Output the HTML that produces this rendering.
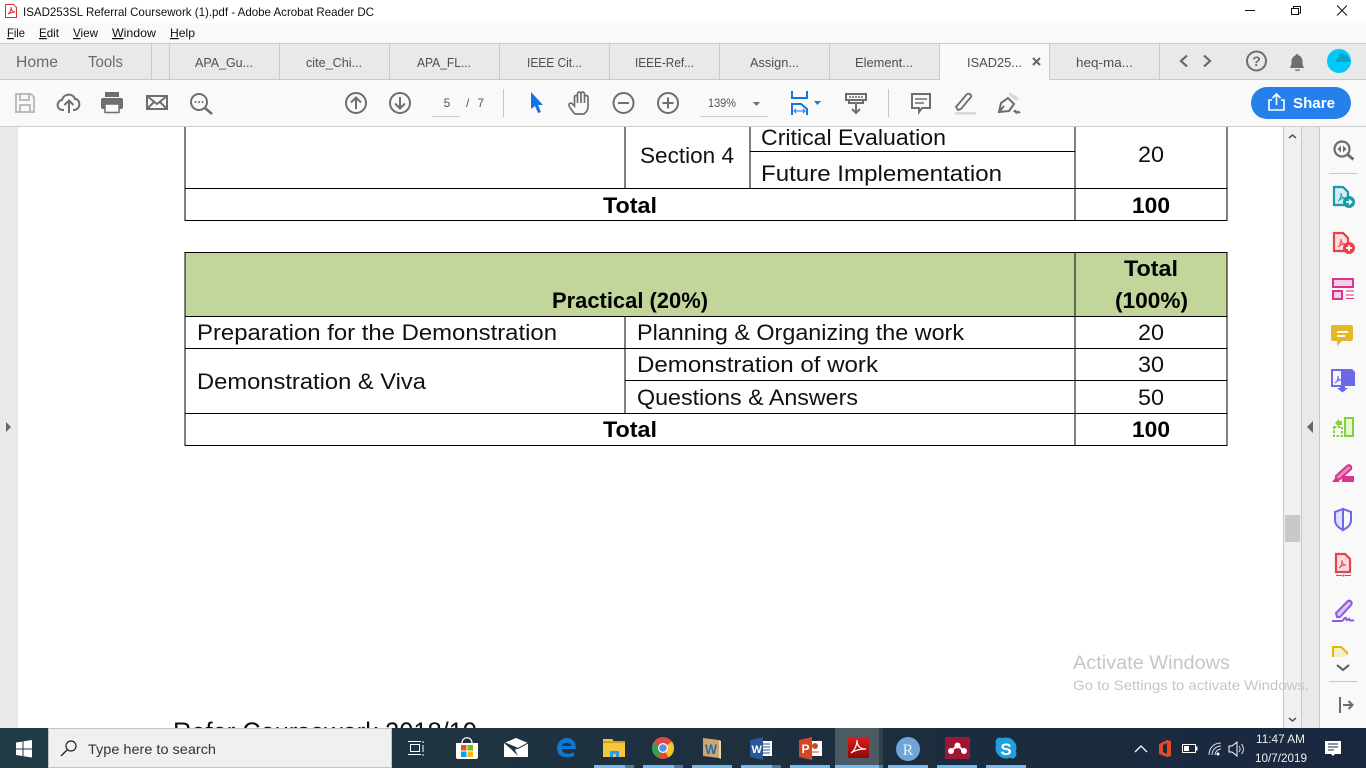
<!DOCTYPE html>
<html lang="en"><head><meta charset="utf-8"><title>ISAD253SL Referral Coursework (1).pdf - Adobe Acrobat Reader DC</title>
<style>
html,body{margin:0;padding:0;width:1366px;height:768px;overflow:hidden;background:#fff}
svg{display:block;font-family:"Liberation Sans",sans-serif}
.m{font-size:12px;fill:#111}
.tb{font-size:13px;fill:#4e4e4e}
.d{font-size:22px;fill:#111}
.b{font-size:22px;fill:#000;font-weight:bold}
.g{fill:none;stroke:#6e6e6e;stroke-width:2}
.l{stroke:#000;stroke-width:1;shape-rendering:crispEdges}
.s{shape-rendering:crispEdges}
</style></head><body>
<svg width="1366" height="768" viewBox="0 0 1366 768" xmlns="http://www.w3.org/2000/svg">
<!-- chrome backgrounds -->
<rect width="1366" height="768" fill="#fff"/>
<rect y="23" width="1366" height="20" fill="#f9f9f9"/>
<rect y="43" width="1366" height="1" fill="#cdcdcd"/>
<rect y="44" width="1366" height="35" fill="#e9e9e9"/>
<rect y="79" width="1366" height="1" fill="#c8c8c8"/>
<rect y="80" width="1366" height="46" fill="#f9f9f9"/>
<rect y="126" width="1366" height="1" fill="#cdcdcd"/>
<!-- title -->
<g fill="none" stroke="#e0322d" stroke-width="1"><path d="M5.500 4.500h8l3 3v10h-11z" fill="#fff"/><path d="M8 14c2-1 3-4 3-7 0 3 1 5 4 5-3 0-5 1-7 2z"/></g>
<text x="23" y="16" class="m" textLength="351" lengthAdjust="spacingAndGlyphs">ISAD253SL Referral Coursework (1).pdf - Adobe Acrobat Reader DC</text>
<!-- window controls -->
<rect x="1245" y="10" width="10" height="1" fill="#111"/>
<g fill="none" stroke="#111" stroke-width="1" class="s"><rect x="1291.500" y="8.500" width="7" height="6"/><path d="M1293.500 8V6.500h7v6.500h-2"/></g>
<path d="M1337 5.500l10 10M1347 5.500l-10 10" stroke="#111" stroke-width="1" fill="none"/>
<!-- menu -->
<text x="7" y="37" class="m" textLength="18" lengthAdjust="spacingAndGlyphs"><tspan text-decoration="underline">F</tspan>ile</text>
<text x="39" y="37" class="m" textLength="20" lengthAdjust="spacingAndGlyphs"><tspan text-decoration="underline">E</tspan>dit</text>
<text x="73" y="37" class="m" textLength="25" lengthAdjust="spacingAndGlyphs"><tspan text-decoration="underline">V</tspan>iew</text>
<text x="112" y="37" class="m" textLength="44" lengthAdjust="spacingAndGlyphs"><tspan text-decoration="underline">W</tspan>indow</text>
<text x="170" y="37" class="m" textLength="25" lengthAdjust="spacingAndGlyphs"><tspan text-decoration="underline">H</tspan>elp</text>
<!-- tabs -->
<text x="16" y="67" font-size="16" fill="#6a6a6a" textLength="42" lengthAdjust="spacingAndGlyphs">Home</text>
<text x="88" y="67" font-size="16" fill="#6a6a6a" textLength="35" lengthAdjust="spacingAndGlyphs">Tools</text>
<g fill="#cacaca" class="s">
<rect x="151" y="44" width="1" height="35"/><rect x="169" y="44" width="1" height="35"/><rect x="279" y="44" width="1" height="35"/><rect x="389" y="44" width="1" height="35"/><rect x="499" y="44" width="1" height="35"/><rect x="609" y="44" width="1" height="35"/><rect x="719" y="44" width="1" height="35"/><rect x="829" y="44" width="1" height="35"/><rect x="939" y="44" width="1" height="35"/><rect x="1049" y="44" width="1" height="35"/><rect x="1159" y="44" width="1" height="35"/>
</g>
<rect x="940" y="44" width="109" height="36" fill="#f9f9f9"/>
<g class="tb">
<text x="195" y="67" textLength="58" lengthAdjust="spacingAndGlyphs">APA_Gu...</text>
<text x="306" y="67" textLength="56" lengthAdjust="spacingAndGlyphs">cite_Chi...</text>
<text x="417" y="67" textLength="54" lengthAdjust="spacingAndGlyphs">APA_FL...</text>
<text x="527" y="67" textLength="55" lengthAdjust="spacingAndGlyphs">IEEE Cit...</text>
<text x="635" y="67" textLength="59" lengthAdjust="spacingAndGlyphs">IEEE-Ref...</text>
<text x="750" y="67" textLength="49" lengthAdjust="spacingAndGlyphs">Assign...</text>
<text x="855" y="67" textLength="58" lengthAdjust="spacingAndGlyphs">Element...</text>
<text x="967" y="67" textLength="55" lengthAdjust="spacingAndGlyphs">ISAD25...</text>
<text x="1076" y="67" textLength="57" lengthAdjust="spacingAndGlyphs">heq-ma...</text>
</g>
<path d="M1033 58l7 7M1040 58l-7 7" stroke="#666" stroke-width="2" fill="none"/>
<path d="M1187 55.500l-6 5.500 6 5.500M1204 55.500l6 5.500-6 5.500" stroke="#666" stroke-width="2.200" fill="none"/>
<circle cx="1256.500" cy="61" r="9.500" class="g"/>
<text x="1256.500" y="66" font-size="14" font-weight="bold" fill="#6e6e6e" text-anchor="middle">?</text>
<path d="M1289.500 68c2-2 2-4 2-7 0-3 2.500-5 4-5.500 0-2 3-2 3 0 2 .5 4 2.500 4 5.500 0 3 0 5 2 7z" fill="#6e6e6e"/><path d="M1294.500 69.500h6c-.5 2-5.500 2-6 0z" fill="#6e6e6e"/>
<circle cx="1339" cy="61" r="12" fill="#00c9f9"/>
<path d="M1335 62l5-9c4 0 9 3 11 9z" fill="#07a5c9"/>
<!-- toolbar -->
<g fill="none" stroke="#bcbcbc" stroke-width="2"><path d="M16 94h15l3 3v15H16z"/><path d="M20 94v6h9v-6M20 112v-7h10v7"/></g>
<g class="g"><path d="M64 110h-1c-7 0-7-9-1-10 2-7 11-7 13-1 6 0 6 11-1 11h-1"/><path d="M69 113v-12M64.500 105l4.500-4.500 4.500 4.500"/></g>
<g fill="#6e6e6e"><rect x="101" y="98" width="22" height="11" rx="2"/><rect x="105" y="92" width="14" height="5"/><rect x="105" y="104" width="14" height="8.500" fill="#f9f9f9" stroke="#6e6e6e" stroke-width="1.500"/></g>
<g class="g"><rect x="147" y="96" width="20" height="13"/><path d="M147 96l10 8 10-8M147 109l7-7M167 109l-7-7"/></g>
<g class="g"><circle cx="199" cy="102" r="8"/><path d="M205 108l7 6" stroke-width="2.500"/></g>
<g fill="#6e6e6e"><circle cx="195.500" cy="102" r="1"/><circle cx="199" cy="102" r="1"/><circle cx="202.500" cy="102" r="1"/></g>
<g class="g"><circle cx="356" cy="103" r="10"/><path d="M356 109v-11M351 102.500l5-5 5 5"/><circle cx="400" cy="103" r="10"/><path d="M400 97v11M395 103.500l5 5 5-5"/></g>
<text x="447" y="107" font-size="12" fill="#555" text-anchor="middle">5</text>
<rect x="432" y="116" width="28" height="1" fill="#c8c8c8"/>
<text x="466" y="107" font-size="12" fill="#555" textLength="18" xml:space="preserve">/ 7</text>
<rect x="503" y="89" width="1" height="28" fill="#c8c8c8"/>
<path d="M531 92l12 13h-5l3 7-3 1-3-7-4 3z" fill="#1473e6"/>
<g class="g"><path d="M575 114c-2-2-6-7-6-9 0-2 2-2.500 3.500-1l2 2V97c0-2 3-2 3 0v-3c0-2.500 3.500-2.500 3.500 0v0c0-2.500 3.500-2.500 3.500 0v3c0-2 3.500-2 3.500 0v9c0 5-2 6-4 8zM577.500 97v6M581 94v9M584.500 94v9M588 97v6" stroke-width="1.700"/></g>
<g class="g"><circle cx="623.500" cy="103" r="10"/><path d="M618 103h11"/><circle cx="668" cy="103" r="10"/><path d="M662.500 103h11M668 97.500v11"/></g>
<text x="708" y="107" font-size="12" fill="#555" textLength="28" lengthAdjust="spacingAndGlyphs">139%</text>
<path d="M753 102h7l-3.500 4z" fill="#6e6e6e"/>
<rect x="700" y="116" width="68" height="1" fill="#c8c8c8"/>
<g fill="none" stroke="#1473e6" stroke-width="2"><path d="M792 91v7h15v-7"/><path d="M792 115v-11h9l6 5v6"/></g><path d="M794 111h11M796 109l-2 2 2 2M803 109l2 2-2 2" stroke="#1473e6" fill="none" stroke-width="1"/>
<path d="M814 101h7l-3.500 4z" fill="#1473e6"/>
<g class="g"><rect x="846" y="94" width="20" height="6"/><path d="M856 103v10M852 109l4 4 4-4M849 100v3h14v-3"/></g>
<path d="M849 97h14" stroke="#6e6e6e" stroke-width="1.500" stroke-dasharray="2 1"/>
<rect x="888" y="89" width="1" height="28" fill="#c8c8c8"/>
<g class="g"><path d="M912 94h18v14h-8l-3 4v-4h-7z"/><path d="M915 99h12M915 103h9" stroke-width="1.500"/></g>
<g class="g"><path d="M958 110l-2-3 11-13c2-1 5 1 4 3l-10 12z" stroke-width="1.800"/></g><rect x="955" y="112" width="21" height="2.500" fill="#d8d8d8"/>
<g class="g" stroke-width="1.800"><path d="M999 112l2-9 7-5 6 6-5 7z"/><path d="M1004 106l-5 6M1014 112c1-2 2-1 2 0s1 1 2 0 1 1 2 0"/></g><path d="M1009 92l10 6-3 3-7-6z" fill="#d8d8d8"/>
<rect x="1251" y="87" width="100" height="32" rx="16" fill="#2680eb"/>
<g fill="none" stroke="#fff" stroke-width="1.600"><path d="M1272 100h-3v10h15v-10h-3"/><path d="M1276.500 105V95M1272.500 98l4-4 4 4"/></g>
<text x="1293" y="108" font-size="15" font-weight="bold" fill="#fff" textLength="42" lengthAdjust="spacingAndGlyphs">Share</text>
<!-- side panels -->
<rect y="127" width="18" height="601" fill="#e9e9e9"/>
<path d="M6 422v10l5-5z" fill="#666"/>
<rect x="1283" y="127" width="1" height="601" fill="#c8c8c8"/>
<rect x="1284" y="127" width="17" height="601" fill="#f0f0f0"/>
<rect x="1301" y="127" width="1" height="601" fill="#c8c8c8"/>
<rect x="1302" y="127" width="17" height="601" fill="#e9e9e9"/>
<rect x="1319" y="127" width="1" height="601" fill="#c8c8c8"/>
<rect x="1320" y="127" width="46" height="601" fill="#f9f9f9"/>
<rect x="1285" y="515" width="15" height="27" fill="#c8c8c8"/>
<path d="M1289 138l3.500-3 3.500 3M1289 718l3.500 3 3.500-3" fill="none" stroke="#555" stroke-width="1.500"/>
<path d="M1313 421v12l-6-6z" fill="#666"/>
<!-- document: table 1 -->
<g class="l" fill="none">
<path d="M185 127v94M625 127v62M750 127v62M1075 127v94M1227 127v94"/>
<path d="M750 151.500h325M185 188.500h1042M185 220.500h1042"/>
</g>
<rect x="185" y="253" width="1042" height="63" fill="#c2d69b"/>
<g class="l" fill="none">
<path d="M185 252v194M625 316v97M1075 252v194M1227 252v194"/>
<path d="M185 252.500h1042M185 316.500h1042M185 348.500h1042M625 380.500h602M185 413.500h1042M185 445.500h1042"/>
</g>
<g transform="translate(0,-1)">
<text x="761" y="146" class="d" textLength="185" lengthAdjust="spacingAndGlyphs">Critical Evaluation</text>
<text x="640" y="164" class="d" textLength="94" lengthAdjust="spacingAndGlyphs">Section 4</text>
<text x="761" y="182" class="d" textLength="241" lengthAdjust="spacingAndGlyphs">Future Implementation</text>
<text x="1138" y="163" class="d" textLength="26" lengthAdjust="spacingAndGlyphs">20</text>
<text x="603" y="214" class="b" textLength="54" lengthAdjust="spacingAndGlyphs">Total</text>
<text x="1132" y="214" class="b" textLength="38" lengthAdjust="spacingAndGlyphs">100</text>
<text x="552" y="309" class="b" textLength="156" lengthAdjust="spacingAndGlyphs">Practical (20%)</text>
<text x="1124" y="277" class="b" textLength="54" lengthAdjust="spacingAndGlyphs">Total</text>
<text x="1115" y="309" class="b" textLength="73" lengthAdjust="spacingAndGlyphs">(100%)</text>
<text x="197" y="341" class="d" textLength="360" lengthAdjust="spacingAndGlyphs">Preparation for the Demonstration</text>
<text x="637" y="341" class="d" textLength="327" lengthAdjust="spacingAndGlyphs">Planning &amp; Organizing the work</text>
<text x="1138" y="341" class="d" textLength="26" lengthAdjust="spacingAndGlyphs">20</text>
<text x="637" y="373" class="d" textLength="241" lengthAdjust="spacingAndGlyphs">Demonstration of work</text>
<text x="1138" y="373" class="d" textLength="26" lengthAdjust="spacingAndGlyphs">30</text>
<text x="197" y="390" class="d" textLength="229" lengthAdjust="spacingAndGlyphs">Demonstration &amp; Viva</text>
<text x="637" y="406" class="d" textLength="221" lengthAdjust="spacingAndGlyphs">Questions &amp; Answers</text>
<text x="1138" y="406" class="d" textLength="26" lengthAdjust="spacingAndGlyphs">50</text>
<text x="603" y="438" class="b" textLength="54" lengthAdjust="spacingAndGlyphs">Total</text>
<text x="1132" y="438" class="b" textLength="38" lengthAdjust="spacingAndGlyphs">100</text>
</g>
<text x="173" y="741" font-size="27" fill="#111" textLength="304" lengthAdjust="spacingAndGlyphs">Refer Coursework 2018/19</text>
<!-- watermark -->
<text x="1073" y="669" font-size="19" fill="#c6c6c6" textLength="157" lengthAdjust="spacingAndGlyphs">Activate Windows</text>
<text x="1073" y="690" font-size="14" fill="#c6c6c6" textLength="236" lengthAdjust="spacingAndGlyphs">Go to Settings to activate Windows.</text>
<!-- right rail icons -->
<g fill="none" stroke="#6e6e6e" stroke-width="2.200"><circle cx="1342" cy="149" r="7.500"/><path d="M1347.500 154.500l6 5" stroke-width="2.800"/></g>
<path d="M1341 145.500l-3.500 3.500 3.500 3.500zM1343 145.500l3.500 3.500-3.500 3.500z" fill="#6e6e6e"/>
<rect x="1329" y="173" width="28" height="1" fill="#c8c8c8"/>
<!-- teal -->
<path d="M1334 187h9l5 5v13h-14z" fill="#d6ecee" stroke="#1a9aa5" stroke-width="2.200"/>
<path d="M1338 201c2-1 3-4 3-8 0 3 1 5 4 5-3 0-5 1-7 3z" fill="none" stroke="#1a9aa5"/>
<circle cx="1349" cy="202" r="6" fill="#1a9aa5"/><path d="M1346 202h5M1349 199.500l2.500 2.500-2.500 2.500" stroke="#fff" stroke-width="1.500" fill="none"/>
<!-- red -->
<path d="M1334 233h9l5 5v13h-14z" fill="#fbdde0" stroke="#e8404d" stroke-width="2.200"/>
<path d="M1338 247c2-1 3-4 3-8 0 3 1 5 4 5-3 0-5 1-7 3z" fill="none" stroke="#e8404d"/>
<circle cx="1349" cy="248" r="6" fill="#e8404d"/><path d="M1346 248h6M1349 245v6" stroke="#fff" stroke-width="1.800"/>
<!-- pink forms -->
<rect x="1333" y="279" width="20" height="8" fill="#f3d0e4" stroke="#d9338f" stroke-width="2"/>
<rect x="1333" y="291" width="9" height="8" fill="#f3d0e4" stroke="#d9338f" stroke-width="2"/>
<path d="M1346 291h8M1346 295h8M1346 298.500h8" stroke="#d9338f" stroke-width="1"/>
<!-- yellow comment -->
<path d="M1335 325h18a2 2 0 0 1 2 2v12a2 2 0 0 1-2 2h-9l-5 5v-5h-4a2 2 0 0 1-2-2v-12a2 2 0 0 1 2-2z" fill="#e3b929" transform="translate(-2 0)"/>
<path d="M1337 332h11M1337 336h8" stroke="#fff" stroke-width="1.800"/>
<!-- export -->
<path d="M1332 370h10v16h-10z" fill="#f4f3ff" stroke="#6b69e6" stroke-width="2"/>
<path d="M1342 369h10l3 3v14h-13z" fill="#6b69e6"/>
<path d="M1335 383c2-1 3-3 3-7 0 3 1 4 3 4-2 0-4 1-6 3z" fill="none" stroke="#6b69e6"/>
<path d="M1337 388h11l-5.500 4.500z" fill="#6b69e6"/><rect x="1340" y="385" width="5" height="4" fill="#6b69e6"/>
<!-- green organise -->
<rect x="1345" y="418" width="8" height="18" fill="#e4f5d0" stroke="#84cf40" stroke-width="2"/>
<path d="M1334 427h8v9h-8z" fill="none" stroke="#84cf40" stroke-width="2" stroke-dasharray="2.500 1.500"/>
<path d="M1335 423l4-4v2h3v4h-3v2z" fill="#84cf40"/>
<!-- pink edit -->
<path d="M1336 476l11-10c2-2 5 0 4 3l-11 10-4 1z" fill="#e78abb" stroke="#d9338f" stroke-width="2"/>
<rect x="1342" y="476" width="12" height="6" fill="#d9338f"/><path d="M1332 482l4-5 4 5z" fill="#d9338f"/>
<!-- shield -->
<path d="M1343 509l8 3v8c0 5-4 8-8 10-4-2-8-5-8-10v-8z" fill="#dfe0fb" stroke="#6b69e6" stroke-width="2"/>
<path d="M1343 509l8 3v8c0 5-4 8-8 10z" fill="#f9f9f9" stroke="#6b69e6" stroke-width="2"/>
<!-- pdf red -->
<path d="M1336 554h9l5 5v13h-14z" fill="#fbdde0" stroke="#e8404d" stroke-width="2.200"/>
<path d="M1339 568c2-1 3-4 3-8 0 3 1 5 4 5-3 0-5 1-7 3z" fill="none" stroke="#e8404d"/>
<path d="M1336 575.500h6M1345 575.500h6" stroke="#e8404d"/><rect x="1342.500" y="574.500" width="2" height="2" fill="#e8404d"/>
<!-- purple sign -->
<path d="M1337 617l-1-4 12-12c2-1 5 1 3 4l-11 12z" fill="#d9c6f5" stroke="#9258de" stroke-width="2"/>
<path d="M1332 621h10c2-1 2-4 4-3 0 3 2 2 3 1 1 2 3 2 5 1" fill="none" stroke="#9258de" stroke-width="2"/>
<!-- yellow clipped -->
<path d="M1333 657v-10h8l6 5.500v4.500z" fill="#f5efc8"/><path d="M1333 657v-10h8l6 5.500v2" fill="none" stroke="#e3b900" stroke-width="2"/>
<path d="M1337 665l6 5 6-5" fill="none" stroke="#555" stroke-width="2"/>
<rect x="1329" y="681" width="28" height="1" fill="#c8c8c8"/>
<rect x="1339" y="697" width="2" height="16" fill="#6e6e6e"/><path d="M1343 705h9M1348.500 701l4 4-4 4" stroke="#6e6e6e" stroke-width="2" fill="none"/>
<!-- taskbar -->
<defs><linearGradient id="tbg" x1="0" x2="1" y1="0" y2="0"><stop offset="0" stop-color="#203a46"/><stop offset=".55" stop-color="#1e2f3e"/><stop offset="1" stop-color="#192740"/></linearGradient></defs>
<rect y="728" width="1366" height="40" fill="url(#tbg)"/>
<path d="M16 742.500l6.500-1v7H16zM23.500 741.300l8.500-1.300v8.500h-8.500zM16 749.500h6.500v6.500l-6.500-1zM23.500 749.500H32v8l-8.500-1.300z" fill="#fff"/>
<rect x="48.500" y="728.500" width="343" height="39" fill="#f0f0f0" stroke="#c4c4c4"/>
<circle cx="71" cy="746" r="5" fill="none" stroke="#222" stroke-width="1.200"/><path d="M67 750l-6 6" stroke="#222" stroke-width="1.300"/>
<text x="88" y="754" font-size="14" fill="#333" textLength="128" lengthAdjust="spacingAndGlyphs">Type here to search</text>
<g fill="none" stroke="#fff" stroke-width="1.200" class="s"><rect x="410.500" y="744.500" width="9" height="7"/><path d="M408 741.500h13M408 754.500h13M423 741v2M423 745v7M423 754v2"/></g>
<!-- store -->
<path d="M456 743h22v14a2 2 0 0 1-2 2h-18a2 2 0 0 1-2-2z" fill="#fff"/><path d="M462 743c0-7 10-7 10 0" fill="none" stroke="#fff" stroke-width="1.300"/>
<rect x="461" y="745" width="5.500" height="5.500" fill="#f25022"/><rect x="467.500" y="745" width="5.500" height="5.500" fill="#7fba00"/><rect x="461" y="751.500" width="5.500" height="5.500" fill="#00a4ef"/><rect x="467.500" y="751.500" width="5.500" height="5.500" fill="#ffb900"/>
<!-- mail -->
<path d="M504 743l12-5 12 5v14h-24z" fill="#fff"/><path d="M504 743l14 5-3 2 3 6-6-6z" fill="#1f3540"/><path d="M504 742.500l14 6 10-5.500" fill="none" stroke="#1f3540" stroke-width="1"/>
<!-- edge -->
<path d="M557 749c0-7 5-11 10-11s9 4 9 11h-14c0 5 7 6 12 3v4c-7 3-17 1-17-7zm5-3h9c0-4-8-4-9 0z" fill="#0a78d4" fill-rule="evenodd"/>
<!-- explorer -->
<path d="M603 739h9l2 2h11v16h-22z" fill="#f3c640"/><rect x="603" y="741" width="22" height="2" fill="#d99b22"/><rect x="610" y="751" width="9" height="3" fill="#2e9be6"/><rect x="610" y="754" width="3" height="3" fill="#2e9be6"/><rect x="616" y="754" width="3" height="3" fill="#2e9be6"/>
<!-- chrome -->
<circle cx="663" cy="748" r="11" fill="#dd4b3e"/>
<path d="M663 748l-9.500-5.500A11 11 0 0 0 657.500 757.500z" fill="#2da44e"/><path d="M663 748l5.500 9.500A11 11 0 0 0 674 748 11 11 0 0 0 672 741.500z" fill="#fbc02d"/>
<circle cx="663" cy="748" r="5" fill="#fff"/><circle cx="663" cy="748" r="3.800" fill="#5b8fe8"/>
<!-- wamp book -->
<path d="M703 738l16 2v18l-16-2z" fill="#cfa470"/><path d="M719 740l2 1v18l-2-1z" fill="#eed6b1"/>
<text x="705" y="754" font-size="14" font-weight="bold" fill="#1d6fb0" textLength="12" lengthAdjust="spacingAndGlyphs">W</text>
<!-- word -->
<rect x="758" y="741" width="14" height="15" fill="#fff"/><path d="M763 744h7M763 747h7M763 750h7M763 753h7" stroke="#2b579a"/><path d="M750 740l13-3v23l-13-3z" fill="#2b579a"/>
<text x="751.500" y="753" font-size="11" font-weight="bold" fill="#fff">W</text>
<!-- ppt -->
<rect x="808" y="741" width="14" height="15" fill="#fff"/><circle cx="815" cy="746" r="3" fill="#d24726"/><path d="M811 752h8" stroke="#d24726"/><path d="M799 740l13-3v23l-13-3z" fill="#d24726"/>
<text x="801.500" y="753" font-size="12" font-weight="bold" fill="#fff">P</text>
<!-- acrobat active -->
<rect x="835" y="728" width="44" height="40" fill="#4c5a64"/><rect x="879" y="728" width="4" height="40" fill="#2f404c"/>
<defs><linearGradient id="acr" x1="0" x2="0" y1="0" y2="1"><stop offset="0" stop-color="#e21a1a"/><stop offset="1" stop-color="#8c0a0a"/></linearGradient></defs>
<rect x="848" y="737" width="21" height="21" fill="url(#acr)"/>
<path d="M851 753c3-2 6-7 6-13 0 6 3 9 9 9-6 0-11 1-15 4z" fill="none" stroke="#fff" stroke-width="1.200"/>
<!-- R -->
<circle cx="908" cy="749" r="12" fill="#6fa5d8"/>
<text x="908" y="755" font-size="16" fill="#e6f0fa" text-anchor="middle" font-family="Liberation Serif,serif">R</text>
<!-- mendeley -->
<rect x="945" y="737" width="25" height="22" fill="#a01533"/>
<g fill="#fff"><circle cx="951" cy="751" r="3"/><circle cx="957.500" cy="745.500" r="3"/><circle cx="964" cy="751" r="3"/></g><path d="M951 751l6.500-5.500 6.500 5.500" stroke="#fff" stroke-width="2" fill="none"/>
<!-- skype -->
<circle cx="1006" cy="748" r="10.500" fill="#1ea1dc"/><circle cx="1000" cy="742" r="4.500" fill="#1ea1dc"/><circle cx="1012" cy="754" r="4.500" fill="#1ea1dc"/>
<text x="1006" y="755" font-size="17" font-weight="bold" fill="#fff" text-anchor="middle">S</text>
<!-- tray -->
<path d="M1135 752l6-6 6 6" fill="none" stroke="#fff" stroke-width="1.300"/>
<path d="M1159 744l8-4 4 1v15l-4 1-8-3zm4 1v7l4 2v-11z" fill="#e64a19" fill-rule="evenodd"/>
<rect x="1182.500" y="744.500" width="13" height="8" fill="none" stroke="#fff"/><rect x="1184" y="746" width="5" height="5" fill="#fff"/><rect x="1196" y="746.500" width="1.500" height="4" fill="#fff"/>
<g fill="none" stroke="#ddd" stroke-width="1"><path d="M1209 755c0-7 5-12 12-12M1212 755c0-5 4-9 9-9M1215 755c0-3 3-6 6-6"/></g><circle cx="1218" cy="754" r="1.500" fill="#fff"/>
<path d="M1229 746h3l5-4v14l-5-4h-3z" fill="none" stroke="#fff"/><path d="M1239 746c1.500 2 1.500 4 0 6M1241.500 744c2.500 3 2.500 7 0 10" fill="none" stroke="#ddd"/>
<text x="1256" y="743" font-size="12" fill="#f0f0f0" textLength="49" lengthAdjust="spacingAndGlyphs">11:47 AM</text>
<text x="1255" y="762" font-size="12" fill="#f0f0f0" textLength="52" lengthAdjust="spacingAndGlyphs">10/7/2019</text>
<path d="M1325 741h16v13h-6l-2 2-2-2h-6z" fill="#fff"/><path d="M1328 744h10M1328 747h10M1328 750h6" stroke="#1a2a40"/>
<!-- running underline -->
<g fill="#76b9ed" class="s">
<rect x="594" y="765" width="31" height="3"/><rect x="643" y="765" width="31" height="3"/><rect x="692" y="765" width="40" height="3"/><rect x="741" y="765" width="31" height="3"/><rect x="790" y="765" width="40" height="3"/><rect x="835" y="765" width="44" height="3"/><rect x="888" y="765" width="40" height="3"/><rect x="937" y="765" width="40" height="3"/><rect x="986" y="765" width="40" height="3"/>
</g>
<g fill="#4a7d9c" class="s"><rect x="625" y="765" width="9" height="3"/><rect x="674" y="765" width="9" height="3"/><rect x="772" y="765" width="9" height="3"/><rect x="879" y="765" width="4" height="3"/></g>
</svg>
</body></html>
